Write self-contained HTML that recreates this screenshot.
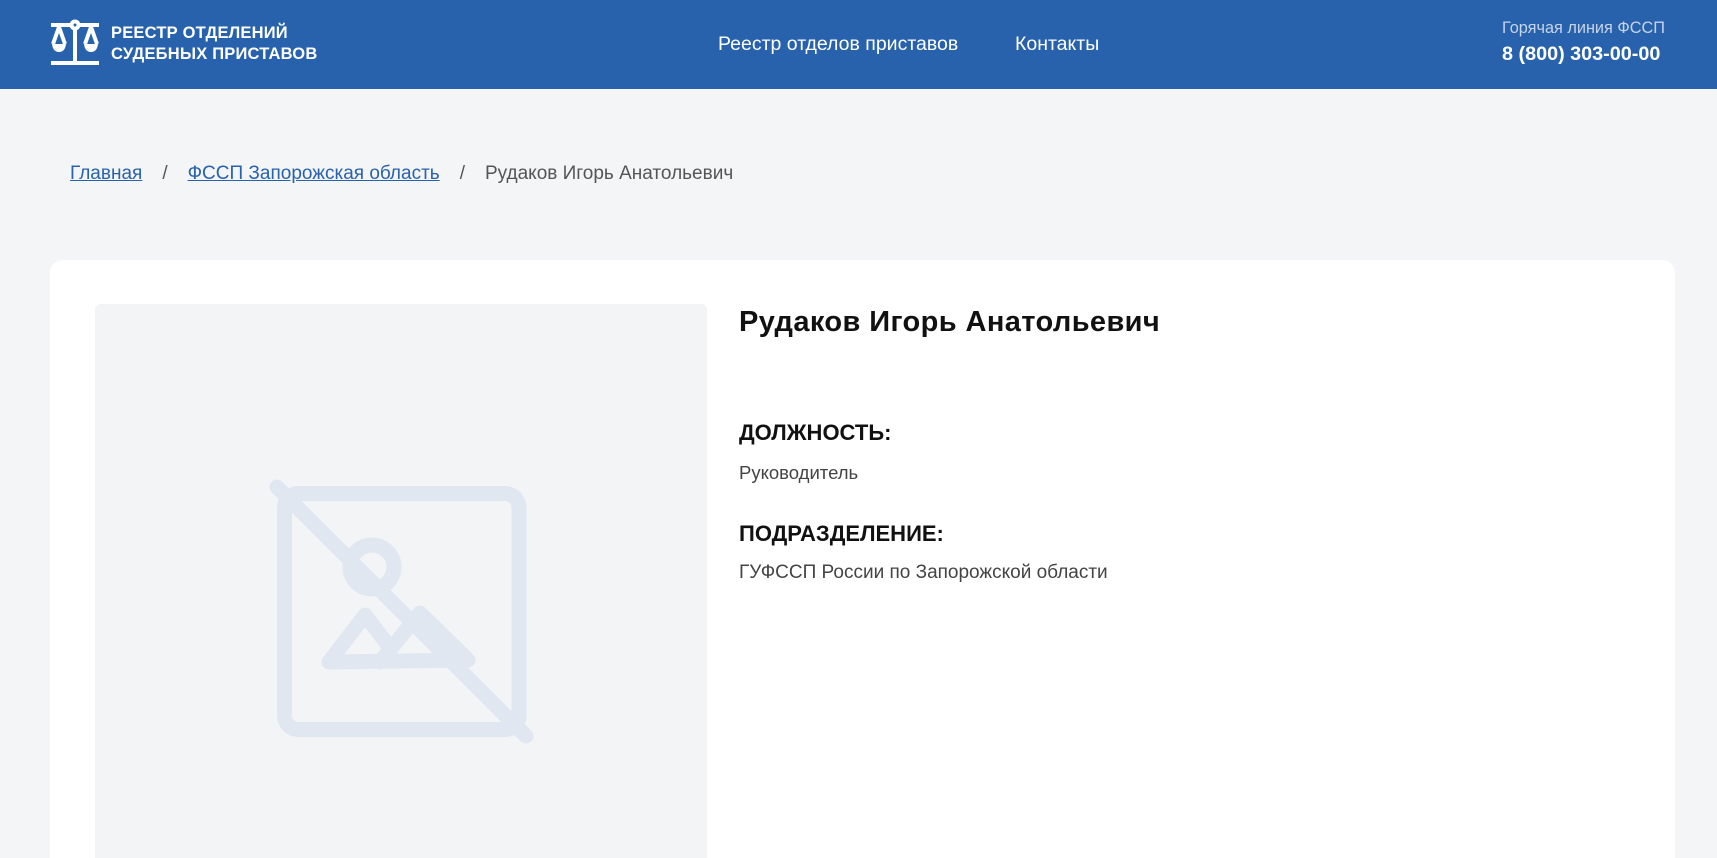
<!DOCTYPE html>
<html><head><meta charset="utf-8"><style>
*{margin:0;padding:0;box-sizing:border-box}
html,body{width:1717px;height:858px;overflow:hidden}
body{background:#f4f5f7;font-family:"Liberation Sans","DejaVu Sans",sans-serif;position:relative}
.hdr{position:absolute;left:0;top:0;width:1717px;height:89px;background:#2862ad;color:#fff}
.abs{position:absolute;white-space:nowrap}
.card{position:absolute;left:50px;top:260px;width:1625px;height:598px;background:#fff;border-radius:13px 13px 0 0}
.img{position:absolute;left:95px;top:304px;width:612px;height:554px;background:#f3f4f6;border-radius:6px 6px 0 0}
a{color:#2862ad;text-decoration:underline}
</style></head><body>
<div class="hdr">
<svg class="abs" style="left:50px;top:19px" width="50" height="48" viewBox="0 0 50 48">
<g fill="none" stroke="#fff" stroke-width="4">
<line x1="1" y1="6" x2="49" y2="6"/><circle cx="25" cy="6" r="3.5" fill="#2862ad"/>
<line x1="25" y1="10" x2="25" y2="43"/><line x1="1" y1="44" x2="49" y2="44"/>
<path d="M9 8 L3 25 M9 8 L15 25 M41 8 L35 25 M41 8 L47 25"/>
</g>
<path d="M2 25 H16 Q15 33 9 33 Q3 33 2 25Z M34 25 H48 Q47 33 41 33 Q35 33 34 25Z" fill="#fff"/>
</svg>
<div class="abs" style="left:111px;top:23px;font-size:16.5px;font-weight:bold;line-height:21px;letter-spacing:0.2px">РЕЕСТР ОТДЕЛЕНИЙ<br>СУДЕБНЫХ ПРИСТАВОВ</div>
<div class="abs" style="left:718px;top:33px;font-size:19.5px">Реестр отделов приставов</div>
<div class="abs" style="left:1015px;top:33px;font-size:19.5px">Контакты</div>
<div class="abs" style="left:1502px;top:19px;font-size:16.3px;color:#c6d4ea">Горячая линия ФССП</div>
<div class="abs" style="left:1502px;top:43px;font-size:19.8px;font-weight:bold">8 (800) 303-00-00</div>
</div>
<div class="abs" style="left:70px;top:163px;font-size:19px;color:#555"><a>Главная</a><span style="margin:0 20px">/</span><a>ФССП Запорожская область</a><span style="margin:0 20px">/</span>Рудаков Игорь Анатольевич</div>
<div class="card"></div>
<div class="img"></div>
<svg class="abs" style="left:0;top:0" width="1717" height="858">
<g fill="none" stroke="#e0e7f1" stroke-width="15" stroke-linecap="round" stroke-linejoin="round">
<rect x="284.5" y="493.5" width="234.5" height="236" rx="14"/>
<circle cx="372" cy="567" r="22"/>
<path d="M329 662 L365 615 L388 645 M380 662 L420 613 L468 660 L329 662"/>
<line x1="277" y1="487" x2="526" y2="736"/>
</g>
</svg>
<div class="abs" style="left:739px;top:306px;font-size:29px;font-weight:bold;color:#111;letter-spacing:0.4px">Рудаков Игорь Анатольевич</div>
<div class="abs" style="left:739px;top:420px;font-size:22px;font-weight:bold;color:#111">ДОЛЖНОСТЬ:</div>
<div class="abs" style="left:739px;top:462px;font-size:18.5px;color:#444">Руководитель</div>
<div class="abs" style="left:739px;top:521px;font-size:22px;font-weight:bold;color:#111">ПОДРАЗДЕЛЕНИЕ:</div>
<div class="abs" style="left:739px;top:562px;font-size:19px;color:#444">ГУФССП России по Запорожской области</div>
</body></html>
